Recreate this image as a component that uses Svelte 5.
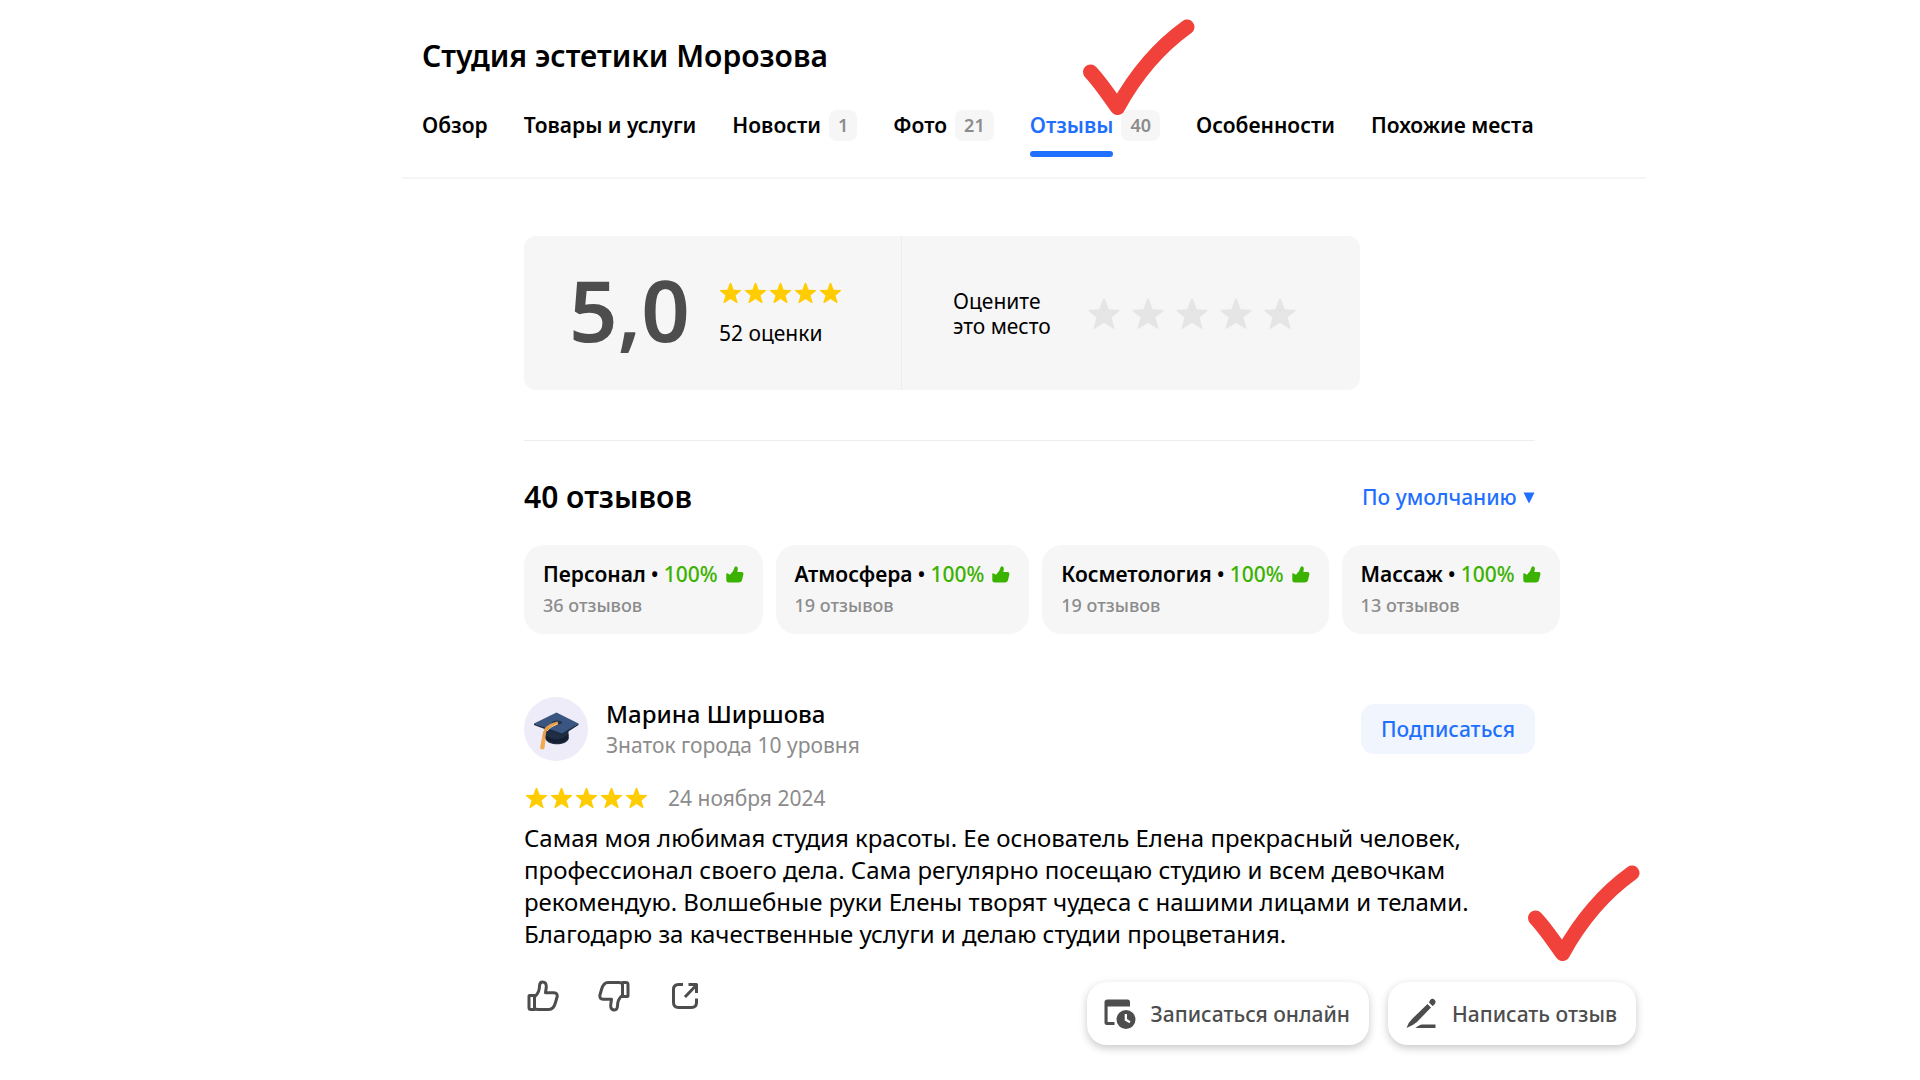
<script>
  const tabs = [
    { label: 'Обзор' },
    { label: 'Товары и услуги' },
    { label: 'Новости', count: 1 },
    { label: 'Фото', count: 21 },
    { label: 'Отзывы', count: 40, active: true },
    { label: 'Особенности' },
    { label: 'Похожие места' },
  ];
  const aspects = [
    { name: 'Персонал', reviews: '36 отзывов' },
    { name: 'Атмосфера', reviews: '19 отзывов' },
    { name: 'Косметология', reviews: '19 отзывов' },
    { name: 'Массаж', reviews: '13 отзывов' },
  ];
  const marks = [1, 2, 3, 4, 5];
</script>

{#snippet star()}
  <svg class="star" viewBox="0 0 34 32" aria-hidden="true">
    <path d="M17 0.8 Q17.9 0.8 18.3 2 L21.6 11.3 L31.8 11.7 Q33.6 11.9 32.3 13.2 L24.4 19.6 L27.4 29.6 Q27.7 31.5 26 30.6 L17 25 L8 30.6 Q6.3 31.5 6.6 29.6 L9.6 19.6 L1.7 13.2 Q0.4 11.9 2.2 11.7 L12.4 11.3 L15.7 2 Q16.1 0.8 17 0.8Z" />
  </svg>
{/snippet}

{#snippet tick()}
  <svg class="tick" viewBox="0 0 112 97" aria-hidden="true">
    <path d="M7.500 53 C17 63 25 75 34.500 88.500 C52 57 76 28 104 8" />
  </svg>
{/snippet}

<main class="page">
  <header class="head">
    <h1>Студия эстетики Морозова</h1>
    <nav class="tabs">
      {#each tabs as tab}
        <a class="tab" class:active={tab.active} href="#{tab.label}">
          <span class="label">{tab.label}</span>
          {#if tab.count}<span class="count">{tab.count}</span>{/if}
          {#if tab.active}{@render tick()}{/if}
        </a>
      {/each}
    </nav>
  </header>

  <section class="content">
    <div class="rating">
      <div class="score">
        <strong>5,0</strong>
        <div class="summary">
          <div class="stars">{#each marks as _}{@render star()}{/each}</div>
          <span>52 оценки</span>
        </div>
      </div>
      <div class="rate">
        <p>Оцените<br />это место</p>
        <div class="choices">
          {#each marks as mark}
            <button aria-label="Оценка {mark}">{@render star()}</button>
          {/each}
        </div>
      </div>
    </div>

    <div class="listhead">
      <h2>40 отзывов</h2>
      <label class="sort">
        <select aria-label="Порядок отзывов">
          <option>По умолчанию</option>
        </select>
        <svg viewBox="0 0 12 12" aria-hidden="true"><path d="M0.500 1.500H11.500L6.600 11.500Q6 12.300 5.400 11.500Z" /></svg>
      </label>
    </div>

    <div class="aspects">
      {#each aspects as aspect}
        <button class="aspect">
          <span class="line">
            <span class="name">{aspect.name}</span><span class="dot">•</span><span class="good">100%</span>
            <svg viewBox="0 0 18 17" aria-hidden="true">
              <path d="M0.300 8Q0.300 6.800 1.300 7.300L3 8.300Q4.200 9.500 5.200 7.300Q7.500 5.500 8.300 2Q8.800 0 10.500 0.400Q12.200 1 11.800 3.600L11.300 6H16Q17.800 6.200 17.400 8.300L16.300 13Q15.800 16.500 12.500 16.500H3Q0.300 16.500 0.300 14Z" />
            </svg>
          </span>
          <span class="reviews">{aspect.reviews}</span>
        </button>
      {/each}
    </div>

    <article class="review">
      <div class="author">
        <svg class="avatar" viewBox="0 0 64 64" aria-hidden="true">
          <circle cx="32" cy="32" r="32" fill="#eeecf8" />
          <path d="M21.500 31V42C24 49 42 49 44.500 42V30Z" fill="#202d42" />
          <path d="M21.500 38Q33 47 44.500 37V42Q33 50 21.500 42Z" fill="#141f32" />
          <path d="M10 26.500L32.500 15.500L54.500 26.500L38 37.500Z" fill="#3a5680" />
          <path d="M10 26.500L38 36.500L54.500 26.500V28L38 38.500L10 28Z" fill="#1b2a42" />
          <ellipse cx="33" cy="25.500" rx="5" ry="2" fill="#223550" />
          <path d="M34 26Q25 28 21.500 33Q19.500 37 19.500 45" fill="none" stroke="#e8a14a" stroke-width="3" />
          <path d="M33 27Q26 30 23 34" fill="none" stroke="#f6c98a" />
          <path d="M18 40Q22 40 21.500 43L20.500 51Q18.500 54 16 51Q17 45 18 40Z" fill="#f0aa52" />
        </svg>
        <div class="who">
          <h3>Марина Ширшова</h3>
          <p>Знаток города 10 уровня</p>
        </div>
        <button class="follow">Подписаться</button>
      </div>
      <div class="meta">
        <div class="stars">{#each marks as _}{@render star()}{/each}</div>
        <time datetime="2024-11-24">24 ноября 2024</time>
      </div>
      <p class="text">
        Самая моя любимая студия красоты. Ее основатель Елена прекрасный человек,<br />
        профессионал своего дела. Сама регулярно посещаю студию и всем девочкам<br />
        рекомендую. Волшебные руки Елены творят чудеса с нашими лицами и телами.<br />
        Благодарю за качественные услуги и делаю студии процветания.
      </p>
    </article>

    <div class="bottom">
      <div class="reactions">
        <button aria-label="Нравится">
          <svg viewBox="0 0 32 32">
            <path d="M2.500 15.500H7.500V29.500H4Q2 29.500 2 27.500V16Q2 15.500 2.500 15.500ZM8 16.500Q12.500 12.500 12.500 6Q12.700 2 15.500 2Q19.500 2 19.300 7L18.500 12.800H27Q30.500 13 30.200 16.500L28.500 22.500Q26.500 29.500 22 29.500H11Q8 29.500 7.500 28" />
          </svg>
        </button>
        <button aria-label="Не нравится">
          <svg viewBox="0 0 32 32">
            <path d="M29.500 16.500H24.500V2.500H28Q30 2.500 30 4.500V16Q30 16.500 29.500 16.500ZM24 15.500Q19.500 19.500 19.500 26Q19.300 30 16.500 30Q12.500 30 12.700 25L13.500 19.200H5Q1.500 19 1.800 15.500L3.500 9.500Q5.500 2.500 10 2.500H21Q24 2.500 24.500 4" />
          </svg>
        </button>
        <button aria-label="Поделиться">
          <svg viewBox="0 0 32 32">
            <path d="M14 4.500H9.500Q4.500 4.500 4.500 9.500V22.500Q4.500 27.500 9.500 27.500H22.500Q27.500 27.500 27.500 22.500V18.500M16 17L27 5.500M19.500 4.500H27.500V13" />
          </svg>
        </button>
      </div>
      <div class="floating">
        <button class="action">
          <svg viewBox="0 0 32 32" aria-hidden="true">
            <path d="M3.500 1.500H23.500Q26 1.500 26 4V8.500H3.600V23.500Q3.600 24 4 24H10.500V27H3Q0.500 27 0.500 24.500V4Q0.500 1.500 3.500 1.500Z" />
            <path fill-rule="evenodd" d="M22 12A9.500 9.500 0 1 1 22 31A9.500 9.500 0 1 1 22 12ZM20.700 16V22.500L25.500 25.200L26.500 23.200L23 21V16Z" />
          </svg>
          Записаться онлайн
        </button>
        <button class="action">
          <svg viewBox="0 0 32 32" aria-hidden="true">
            <path d="M25 2.300Q27.500 -0.500 30 2.200Q31.500 4.500 29 7L27.500 8L24 4.500ZM22.500 6L26 9.500L12 24Q8 27.500 1.500 30Q3.500 24 7.500 20.500ZM10.500 30Q14.500 26.500 17 26.500H30.500V30Z" />
          </svg>
          Написать отзыв
          {@render tick()}
        </button>
      </div>
    </div>
  </section>
</main>

<style>
  :global(body) {
    background: #fff;
  }
  .page {
    min-height: 100vh;
    box-sizing: border-box;
    padding: 0 274px 0 402px;
    font: 500 21px/28px 'Noto Sans', sans-serif;
    color: #000;
  }
  h1,
  h2,
  h3,
  p {
    margin: 0;
    font-weight: 500;
  }
  button,
  select {
    appearance: none;
    margin: 0;
    padding: 0;
    border: 0;
    background: none;
    color: inherit;
    font: inherit;
    text-align: left;
    cursor: pointer;
  }
  svg {
    display: block;
    flex: none;
  }
  .head {
    padding: 36px 20px 0;
    border-bottom: 2px solid #f6f6f6;
  }
  h1,
  h2 {
    font-size: 30px;
    line-height: 40px;
    font-weight: 600;
  }
  .tabs {
    display: flex;
    gap: 36px;
    padding: 34px 0 20px;
    font-weight: 600;
  }
  .tab {
    position: relative;
    display: flex;
    gap: 8px;
    height: 47px;
    color: inherit;
    text-decoration: none;
    white-space: nowrap;
  }
  .label {
    display: flex;
    flex-direction: column;
    justify-content: space-between;
    padding-top: 1px;
  }
  .active .label {
    color: #1f70ff;
  }
  .active .label::after {
    content: '';
    height: 6px;
    border-radius: 3px;
    background: #1f70ff;
  }
  .count {
    height: 31px;
    padding: 0 9px;
    border-radius: 8px;
    background: #f6f6f6;
    color: #8c8c8c;
    font-size: 18px;
    line-height: 31px;
  }
  .tick {
    position: absolute;
    width: 112px;
    height: 97px;
    pointer-events: none;
  }
  .tick path {
    fill: none;
    stroke: #f0413a;
    stroke-width: 15;
    stroke-linecap: round;
    stroke-linejoin: round;
  }
  .tab .tick {
    top: -91px;
    left: 53px;
  }
  .content {
    padding: 57px 0 0 122px;
  }
  .rating {
    display: flex;
    width: 836px;
    height: 154px;
    border-radius: 12px;
    background: #f6f6f6;
  }
  .score {
    display: flex;
    align-items: center;
    gap: 29px;
    box-sizing: border-box;
    width: 378px;
    padding-left: 45px;
    border-right: 1px solid #ededed;
  }
  .score strong {
    padding-bottom: 8px;
    color: #4d4d4d;
    font-size: 85px;
    line-height: 100px;
    font-weight: 600;
  }
  .summary {
    display: grid;
    gap: 15px;
    padding-top: 2px;
    font-weight: 400;
  }
  .stars {
    display: flex;
    gap: 2px;
  }
  .stars .star {
    width: 23px;
    height: 22px;
    fill: #ffcc00;
  }
  .rate {
    display: flex;
    align-items: center;
    gap: 36px;
    padding: 2px 0 0 51px;
    line-height: 25px;
  }
  .rate p {
    font-weight: 400;
  }
  .choices {
    display: flex;
    gap: 10px;
  }
  .choices .star {
    width: 34px;
    height: 32px;
    fill: #e5e5e5;
  }
  .listhead {
    display: flex;
    align-items: center;
    justify-content: space-between;
    margin: 50px 111px 0 0;
    padding: 36px 0 28px;
    border-top: 1px solid #ededed;
  }
  .sort {
    display: flex;
    align-items: center;
    gap: 6px;
    color: #1f70ff;
  }
  .sort svg {
    width: 12px;
    height: 12px;
    fill: #1f70ff;
  }
  .aspects {
    display: flex;
    gap: 13px;
  }
  .aspect {
    display: grid;
    gap: 3px;
    align-content: start;
    height: 89px;
    padding: 15px 19px 0;
    border-radius: 20px;
    background: #f6f6f6;
    white-space: nowrap;
  }
  .line {
    display: flex;
    align-items: center;
  }
  .name {
    font-weight: 600;
  }
  .dot {
    padding: 0 5px;
  }
  .good {
    color: #3bb200;
  }
  .line svg {
    width: 18px;
    height: 17px;
    margin-left: 8px;
    fill: #3bb200;
  }
  .reviews {
    color: #8c8c8c;
    font-size: 18px;
  }
  .review {
    padding: 63px 111px 0 0;
  }
  .author {
    display: flex;
    align-items: center;
    gap: 18px;
  }
  .avatar {
    width: 64px;
    height: 64px;
  }
  .who {
    flex: 1;
  }
  h3 {
    font-size: 24px;
    line-height: 32px;
  }
  .who p,
  time {
    color: #8c8c8c;
    font-weight: 400;
    line-height: 30px;
  }
  .follow {
    padding: 11px 20px;
    border-radius: 13px;
    background: #f1f5fe;
    color: #1f70ff;
  }
  .meta {
    display: flex;
    align-items: center;
    gap: 20px;
    padding: 22px 0 9px 1px;
  }
  .text {
    font-size: 24px;
    line-height: 32px;
    font-weight: 400;
    white-space: nowrap;
  }
  .bottom {
    display: flex;
    align-items: flex-start;
    justify-content: space-between;
    padding: 30px 10px 34px 3px;
  }
  .reactions {
    display: flex;
    gap: 39px;
  }
  .reactions svg {
    width: 32px;
    height: 32px;
    fill: none;
    stroke: #4d4d4d;
    stroke-width: 3;
    stroke-linejoin: round;
  }
  .floating {
    display: flex;
    gap: 19px;
    padding-top: 2px;
  }
  .action {
    position: relative;
    display: flex;
    align-items: center;
    gap: 15px;
    height: 63px;
    padding: 0 19px 0 17px;
    border-radius: 20px;
    background: #fff;
    box-shadow: 0 3px 8px rgb(0 0 0 / 22%);
    color: #4d4d4d;
    white-space: nowrap;
  }
  .action svg:not(.tick) {
    width: 32px;
    height: 32px;
    fill: #4d4d4d;
  }
  .action .tick {
    top: -117px;
    right: -4px;
  }
</style>
